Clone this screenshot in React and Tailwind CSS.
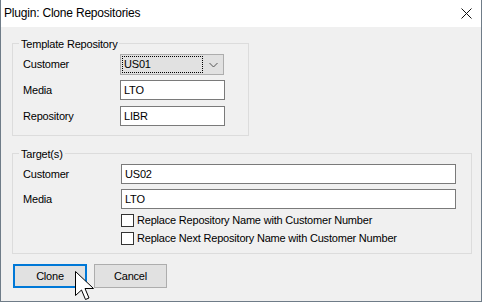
import React from "react";

const body = { fontFamily: '"Liberation Sans", Arial, sans-serif' };

function TextBox({ value, className }) {
  return (
    <div className={`h-[20px] border border-[#7a7a7a] bg-white pl-[3px] flex items-center text-black ${className}`}>
      {value}
    </div>
  );
}

function Row({ label, labelWidth, children, className = "" }) {
  return (
    <div className={`flex items-center ${className}`}>
      <span style={{ width: labelWidth }} className="shrink-0">{label}</span>
      {children}
    </div>
  );
}

function Check({ label, className = "" }) {
  return (
    <div className={`flex items-center ${className}`}>
      <div className="w-[13px] h-[13px] border border-[#333333] bg-white shrink-0" />
      <span className="ml-[3px]">{label}</span>
    </div>
  );
}

export default function App() {
  return (
    <div
      className="w-[482px] h-[302px] flex flex-col border-x border-b border-[#6f7c88] bg-[#f0f0f0] relative text-[11px] leading-[13px] tracking-[-0.2px] text-black overflow-hidden"
      style={body}
    >
      {/* title bar */}
      <div className="h-[27px] shrink-0 bg-white flex items-center justify-between pl-[3px] pr-[9px]">
        <span className="text-[12px] tracking-[-0.2px]">Plugin: Clone Repositories</span>
        <svg width="11" height="11" viewBox="0 0 11 11">
          <path d="M0.5 0.5 L10.5 10.5 M10.5 0.5 L0.5 10.5" stroke="#111" strokeWidth="1" fill="none" />
        </svg>
      </div>

      <div className="flex-1 pl-[11px] pt-[16px]">
        {/* Template Repository */}
        <div className="relative w-[237px] h-[93px] border border-[#dcdcdc] pt-[10px] pl-[10px]">
          <span className="absolute top-[-6px] left-[6px] px-[2px] bg-[#f0f0f0]">Template Repository</span>
          <Row label="Customer" labelWidth={97}>
            <div className="w-[104px] h-[21px] border border-[#adadad] bg-[#e1e1e1] flex items-center pl-[1px] pr-[5px]">
              <div className="flex-1 h-[17px] border border-dotted border-black flex items-center pl-[1px]">US01</div>
              <svg width="9" height="6" viewBox="0 0 9 6" className="ml-[6px]">
                <path d="M0.5 1 L4.5 5 L8.5 1" stroke="#555" strokeWidth="1" fill="none" />
              </svg>
            </div>
          </Row>
          <Row label="Media" labelWidth={97} className="mt-[5px]">
            <TextBox value="LTO" className="w-[105px]" />
          </Row>
          <Row label="Repository" labelWidth={97} className="mt-[6px]">
            <TextBox value="LIBR" className="w-[105px]" />
          </Row>
        </div>

        {/* Target(s) */}
        <div className="relative w-[460px] h-[101px] border border-[#dcdcdc] mt-[17px] pt-[10px] pl-[10px]">
          <span className="absolute top-[-6px] left-[6px] px-[2px] bg-[#f0f0f0]">Target(s)</span>
          <Row label="Customer" labelWidth={98}>
            <TextBox value="US02" className="w-[335px]" />
          </Row>
          <Row label="Media" labelWidth={98} className="mt-[5px]">
            <TextBox value="LTO" className="w-[335px]" />
          </Row>
          <div className="pl-[98px]">
            <Check label="Replace Repository Name with Customer Number" className="mt-[5px]" />
            <Check label="Replace Next Repository Name with Customer Number" className="mt-[5px]" />
          </div>
        </div>

        {/* buttons */}
        <div className="flex gap-[7px] mt-[10px] ml-[1px]">
          <button className="w-[74px] h-[24px] border-2 border-[#0078d7] bg-[#e1e1e1]">Clone</button>
          <button className="w-[73px] h-[24px] border border-[#adadad] bg-[#e1e1e1]">Cancel</button>
        </div>
      </div>

      {/* mouse pointer */}
      <svg className="absolute left-[73px] top-[270px]" width="23" height="31" viewBox="0 0 23 31">
        <path
          d="M1.5 1.5 L1.5 25.5 L7.5 20 L11.5 29.5 L15 28 L11 18.5 L19.5 18.5 Z"
          fill="#fff"
          stroke="#000"
          strokeWidth="1"
          strokeLinejoin="miter"
        />
      </svg>
    </div>
  );
}
